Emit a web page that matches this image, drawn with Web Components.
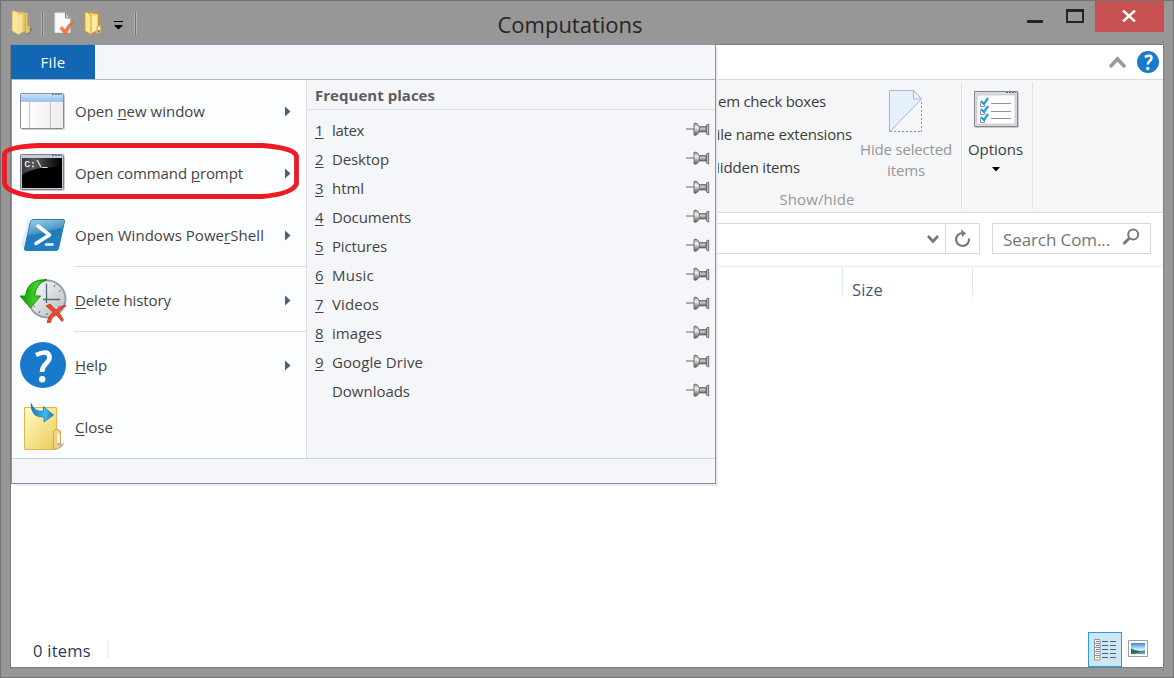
<!DOCTYPE html>
<html lang="en">
<head>
<meta charset="utf-8">
<title>Computations</title>
<style>
html,body{margin:0;height:100%;overflow:hidden}
body{font:15px/20px "Open Sans","Noto Sans",sans-serif;color:#3c3c3c}
</style>
</head>
<body>
<explorer-window></explorer-window>
<script>
const ICONS = {
folder:`<svg width="23" height="27" viewBox="0 0 23 27"><defs><linearGradient id="a"><stop stop-color="#fff6bd"/><stop offset="1" stop-color="#d9ae48"/></linearGradient></defs><path d="M15 24l5-7 2 2-4 5z" fill="#666" opacity=".45"/><path d="M5 1.500l11.500 1.500v17L8 24z" fill="#e6c263"/><path d="M8 5l7-1v15.500L8 24z" fill="url(#a)"/><path d="M1.300 1.500L4 1l4 3.500V24.500L1.300 21z" fill="#f9e897" stroke="#e6c970" stroke-width=".7"/><path d="M15 17l2-1.500 1.500 1V22L15 23.500z" fill="#e9cb5c"/></svg>`,
folder2:`<svg width="18" height="25" viewBox="0 0 18 25"><path d="M3 1.500L14.500 2.500V19L7 23z" fill="#f3d272" stroke="#cf9a25"/><path d="M7.500 5L13 4v14.500L7.500 22z" fill="#fbeba4"/><path d="M1 1.500L3.500 1.500 7 5V23.500L1 20z" fill="#fbe58f" stroke="#d9a32c"/><path d="M12.500 15.500l3-1.500 1.500 1v6l-4.500 2z" fill="#e8bc46"/><path d="M14 16h2v5h-2z" fill="#eaf4ff"/><path d="M14 19h2v2h-2z" fill="#478fe0"/></svg>`,
doc:`<svg width="21" height="24" viewBox="0 0 21 24"><path d="M1 1h10.500L16 5.500V20.500H1z" fill="#fafafa" stroke="#e4e4e4"/><path d="M11.500 1v5H16z" fill="#ddd" stroke="#666" stroke-width=".8"/><path d="M6 16.500l2-2 3 3.500Q13.500 12.500 18 9.500h2Q15.500 15 12.500 22h-2z" fill="#f07d4e" stroke="#d8622f" stroke-width=".6"/></svg>`,
qat:`<svg width="9" height="9"><path d="M0 .5h9" stroke="#000"/><path d="M.5 4h8v1L4.500 8.500.5 5z" fill="#000"/></svg>`,
newwin:`<svg width="50" height="50"><defs><linearGradient id="a" x2="0" y2="1"><stop stop-color="#c9e4fb"/><stop offset="1" stop-color="#8fc5f8"/></linearGradient><linearGradient id="b"><stop stop-color="#fff"/><stop offset="1" stop-color="#eee"/></linearGradient></defs><rect x="2.500" y="8.500" width="43" height="35" rx="1" fill="none" stroke="#ccc"/><rect x="1.500" y="7.500" width="43" height="35" rx="1" fill="url(#b)" stroke="#8b8d92"/><path d="M2 8h42v7H2z" fill="url(#a)"/><path d="M2 15.500h42M10.500 16v26M31.500 16v26" stroke="#c4c4c4"/><path d="M33 8.500h10" stroke="#537092" stroke-dasharray="2 1"/></svg>`,
cmd:`<svg width="50" height="50"><defs><linearGradient id="a"><stop stop-color="#383838"/><stop offset=".3" stop-color="#595959"/><stop offset="1" stop-color="#000"/></linearGradient></defs><rect x="2.500" y="7.500" width="43" height="35" rx="1" fill="none" stroke="#ccc"/><rect x="1.500" y="6.500" width="43" height="35" rx="1" fill="#c7ccd4" stroke="#7c818b"/><path d="M33 7.500h10" stroke="#537092" stroke-dasharray="2 1"/><path d="M3 10h40v30H3z" fill="#000"/><path d="M3 10h39v9Q15 18 3 27z" fill="url(#a)"/><text x="5.500" y="18.500" font-family="Liberation Mono" font-size="9" fill="#fff" stroke="#fff" stroke-width=".25" textLength="23">C:\\_</text></svg>`,
ps:`<svg width="50" height="50"><defs><linearGradient id="a" x2=".3" y2="1"><stop stop-color="#a9d4e8"/><stop offset=".48" stop-color="#4a98c8"/><stop offset=".52" stop-color="#237cba"/><stop offset="1" stop-color="#1c7fc8"/></linearGradient></defs><path d="M9 10L2 36l4 4 6-30z" fill="#b9dbee" opacity=".45"/><path d="M15 9.500h29q2 0 1.500 2l-6 27q-.5 2-2.500 2H7q-2 0-1.500-2l6-27q.5-2 3.500-2z" fill="url(#a)" stroke="#2c7cab"/><path d="M19 16L30.500 25 17 33.500" fill="none" stroke="#fff" stroke-width="3.500" stroke-linecap="round" stroke-linejoin="round"/><path d="M27 34.500h6.500" stroke="#fff" stroke-width="2.500" stroke-linecap="round"/></svg>`,
history:`<svg width="50" height="50"><defs><linearGradient id="a" y2="1"><stop stop-color="#fff"/><stop offset="1" stop-color="#b5babf"/></linearGradient><linearGradient id="g"><stop stop-color="#0d9800"/><stop offset=".6" stop-color="#42d32b"/><stop offset="1" stop-color="#169f0c"/></linearGradient></defs><circle cx="28" cy="24" r="18.500" fill="url(#a)" stroke="#9ca0a3" stroke-width="2"/><g stroke="#52687b"><path d="M27.500 8.500V28M24 24.500h17" stroke-width="1.300"/><path d="M36 10l-1 2M41.500 15.500l-1.500 1M14.500 32l1.500-1M20 38l1-2M28 40v-2M40 32l-1-1"/></g><path d="M28 4.500Q8 4 6.500 21H1l10.500 12L21.500 21h-6Q17 8 28 4.500z" fill="url(#g)" stroke="#168b0e"/><path d="M27 31l4-2 6 6q4-4 9-5l1 1q-4 2-7.500 6 3 4 5 8l-1.500 1.500L36.500 39q-4 3.500-5 8.500h-3.500q1-6 6-10.500z" fill="#e94a2d" stroke="#c92d18" stroke-width=".7"/></svg>`,
help:`<svg width="50" height="50"><circle cx="24" cy="25" r="23" fill="#1979ca"/><path d="M17 15q13-6 13.500 2.500c0 6-7.500 6-7.500 14.500" fill="none" stroke="#fff" stroke-width="4.600"/><circle cx="23.200" cy="39.300" r="3.200" fill="#fff"/></svg>`,
close:`<svg width="50" height="50"><defs><linearGradient id="a" x2="1" y2="1"><stop stop-color="#fffcc4"/><stop offset="1" stop-color="#ebcb58"/></linearGradient><linearGradient id="b"><stop stop-color="#1679ba"/><stop offset=".65" stop-color="#40bbf5"/><stop offset="1" stop-color="#1477b5"/></linearGradient></defs><path d="M38 46l7-6-1 4-4 3z" fill="#bbb"/><path d="M5.500 5.500h32v42h-32z" fill="url(#a)" stroke="#dfb64e"/><path d="M34.500 29l3-2 4 2v15l-3.500 3-3.500.5z" fill="#f2d28b" stroke="#d6a44a"/><path d="M39.500 31.500v11.500" stroke="#fff" stroke-width="2"/><path d="M39.500 41v2" stroke="#5eaef0" stroke-width="2"/><path d="M12 1.500q3 8 12.500 8V4.500L34.500 13 25 20v-5Q12 16 12 1.500z" fill="url(#b)" stroke="#2372a2" stroke-width=".7"/></svg>`,
pin:`<svg width="24" height="14"><defs><linearGradient id="a" x2="0" y2="1"><stop stop-color="#888"/><stop offset=".35" stop-color="#f4f4f4"/><stop offset="1" stop-color="#555"/></linearGradient><linearGradient id="b" x2="0" y2="1"><stop stop-color="#777"/><stop offset=".4" stop-color="#ccc"/><stop offset="1" stop-color="#5a5a5a"/></linearGradient></defs><path d="M0 7h8" stroke="#666"/><path d="M12.500 4.500H20v5.500h-7.500z" fill="url(#b)" stroke="#666" stroke-width=".7"/><path d="M8 1.500q2-1 3.500.5 2 2 2 5.200t-2 5Q10 13.800 8 13z" fill="url(#a)" stroke="#6a6a6a" stroke-width=".9"/><path d="M20.500 3l2.200-1v11l-2.200-1z" fill="#bbb" stroke="#666" stroke-width=".9"/></svg>`,
arrow:`<svg width="6" height="11"><path d="M0 .5l5.500 5L0 10.500z" fill="#4b607f"/></svg>`,
min:`<svg width="16" height="3"><path d="M0 0h16v3H0z" fill="#252525"/></svg>`,
max:`<svg width="18" height="14"><path d="M0 0h18v14H0zM2 3v9h14V3z" fill="#252525" fill-rule="evenodd"/></svg>`,
x:`<svg width="14" height="12"><path d="M1 .5L13 11.500M13 .5L1 11.500" stroke="#fff" stroke-width="2.400"/></svg>`,
collapse:`<svg width="17" height="14"><path d="M1 12l7.500-8L16 12" fill="none" stroke="#999" stroke-width="3.600"/></svg>`,
helpsm:`<svg width="22" height="22"><circle cx="11" cy="11" r="11" fill="#1979ca"/><path d="M7.800 6q6.500-3 6.700 1c0 3-3.700 3-3.700 6.500" fill="none" stroke="#fff" stroke-width="2.600"/><circle cx="10.800" cy="17.500" r="1.700" fill="#fff"/></svg>`,
hide:`<svg width="34" height="43"><path d="M.5.5h24l8 8.500L.5 42z" fill="#e6f0fd" stroke="#a9b6cf"/><path d="M24.500 .5V9h8z" fill="#edf4fd" stroke="#a9b6cf"/><path d="M32.500 12v30M1 41.500h32" fill="none" stroke="#8592ba" stroke-dasharray="2.200 1.800"/></svg>`,
options:`<svg width="45" height="37"><path d="M1.500 1.500h43v35h-43z" fill="none" stroke="#ccc"/><path d="M.5.5h43v35H.5z" fill="#d7dae0" stroke="#81848c"/><path d="M3 4h38v29H3z" fill="#fff" stroke="#b6bac4" stroke-width=".6"/><path d="M32 1.500h10" stroke="#53617f" stroke-dasharray="2 1"/><path d="M17 12.500h20M17 20.500h20M17 27.500h20" stroke="#92939f" stroke-width="1.200"/><g id="c"><path d="M6.500 11.500h4v4h-4z" fill="none" stroke="#8d8da5"/><path d="M7 10l3 3 4-6" fill="none" stroke="#29a0d8" stroke-width="2.300"/></g><use href="#c" y="8"/><use href="#c" y="16"/></svg>`,
down:`<svg width="8" height="5"><path d="M0 0h8L4 4.500z" fill="#000"/></svg>`,
chev:`<svg width="14" height="10"><path d="M2 2l5 5.500L12 2" fill="none" stroke="#777" stroke-width="2.700"/></svg>`,
refresh:`<svg width="18" height="19"><path d="M8.500 4A6.500 6.500 0 1 0 15 9.500" fill="none" stroke="#777" stroke-width="2.200"/><path d="M7 .5l5 3.800L8 8z" fill="#777"/></svg>`,
search:`<svg width="18" height="18"><circle cx="11.200" cy="6.500" r="5" fill="none" stroke="#777" stroke-width="2"/><path d="M7.500 10L1.500 16" stroke="#777" stroke-width="2.800"/></svg>`,
details:`<svg width="24" height="22"><path d="M1.500.5h5.500v20.500H1.500z" fill="#fff" stroke="#8a90a5"/><path d="M1 4.500h6M1 8.500h6M1 12.500h6M1 16.500h6" stroke="#8a90a5"/><path d="M3 2.500h3" stroke="#3b9b58"/><path d="M3 6.500h3" stroke="#e33"/><path d="M3 10.500h3" stroke="#3482ed"/><path d="M3 14.500h3M3 18.500h3" stroke="#c6b927"/><path d="M9 2.500h14M9 6.500h14M9 10.500h14M9 14.500h14M9 18.500h14" stroke="#526078" stroke-dasharray="6 2"/></svg>`,
thumb:`<svg width="20" height="17"><defs><linearGradient id="a" x2="0" y2="1"><stop stop-color="#3c86d8"/><stop offset=".6" stop-color="#d9effa"/></linearGradient></defs><path d="M.5.5h19v16H.5z" fill="#fff" stroke="#969fac"/><path d="M3 3h14v11H3z" fill="url(#a)"/><path d="M3 8.500q6 3.500 14 2v3.500H3z" fill="#28704a"/><path d="M6 14q5-2.500 11-3v3z" fill="#6499bd"/></svg>`
};
const define = (name, css, html, init) => {
  const template = document.createElement('template');
  template.innerHTML = `<style>*{box-sizing:border-box}${css}</style>${html}`;
  customElements.define(name, class extends HTMLElement {
    constructor(){ super(); this.attachShadow({mode:'open'}); }
    connectedCallback(){
      if (this.ready) return;
      this.ready = true;
      this.shadowRoot.append(template.content.cloneNode(true));
      if (init) init(this, this.shadowRoot);
    }
  });
};
define('ui-icon', ':host{display:block;flex:none}svg{display:block}', '', (el, root) => {
  const box = document.createElement('template');
  box.innerHTML = ICONS[el.getAttribute('name')];
  root.append(box.content.cloneNode(true));
});
// A one-line label; its tracking is set so that the line takes up the given width.
define('ui-label', ':host{display:block;flex:none;white-space:pre}span{display:inline-block}::slotted(u){text-underline-offset:2px;text-decoration-thickness:1px}', '<span><slot></slot></span>', (el, root) => {
  const width = +el.getAttribute('width'), span = root.querySelector('span');
  if (width) span.style.letterSpacing = (width - span.getBoundingClientRect().width) / el.textContent.length + 'px';
});
define('title-bar', `:host{display:flex;height:43px;position:relative;padding:8px 0 0 11px;align-items:flex-start}
 i{width:3px;height:23px;background:#707070;border:1px solid #b4b4b4;border-width:0 1px;margin-top:3px}
 .t{position:absolute;left:0;right:0;top:8px;display:flex;justify-content:center;padding-right:34px;font-size:22px;line-height:30px;color:#252525}
 .b{margin-left:auto;display:flex;margin-top:-8px;padding-right:9px}
 .c{width:69px;height:31px;background:#c75050;display:grid;place-items:center;margin-left:11px;padding:0 2px 2px 0}
 .q{margin:12px 12px 0 12px}`,
 `<ui-icon name="folder" style="margin-top:1px;margin-left:-1px"></ui-icon><i style="margin-left:7px"></i><ui-icon name="doc" style="margin:3px 9px 0 10px"></ui-icon><ui-icon name="folder2" style="margin-top:2px"></ui-icon><ui-icon class="q" name="qat"></ui-icon><i style="margin-left:-1px"></i>
 <div class="t"><ui-label width="145">Computations</ui-label></div>
 <div class="b"><ui-icon name="min" style="margin-top:19px"></ui-icon><ui-icon name="max" style="margin:8px 0 0 23px"></ui-icon><div class="c"><ui-icon name="x"></ui-icon></div></div>`);
define('ribbon-bar', `:host{display:block}
 .tabs{height:35px;border-bottom:1px solid #dadbdc;display:flex;justify-content:flex-end;align-items:center;gap:11px;padding-right:4px}
 .r{height:133px;background:#f5f6f7;border-bottom:1px solid #dadbdc;display:flex;padding:2px 0 3px 696px}
 .g{border-right:1px solid #e2e3e4;display:grid}
 .sh{width:255px;grid-template:98px 30px/145px 109px}
 .ch{padding:4px 0 0 2px;display:grid;grid-auto-rows:33px;line-height:31px;align-content:start}
 .h{display:flex;flex-direction:column;align-items:center;color:#979797;line-height:21px;padding:8px 1px 0 0}
 .cap{grid-column:1/3;color:#979797;justify-self:center;padding:9px 34px 0 0}
 .o{width:71px;justify-items:center;align-content:start;padding:9px 3px 0 0}`,
 `<div class="tabs"><ui-icon name="collapse"></ui-icon><ui-icon name="helpsm"></ui-icon></div>
 <div class="r"><div class="g sh"><div class="ch"><ui-label width="117">Item check boxes</ui-label><ui-label width="143">File name extensions</ui-label><ui-label width="91">Hidden items</ui-label></div>
 <div class="h"><ui-icon name="hide" style="margin-bottom:6px"></ui-icon><ui-label width="92">Hide selected</ui-label><ui-label width="38">items</ui-label></div><ui-label class="cap" width="75">Show/hide</ui-label></div>
 <div class="g o"><ui-icon name="options" style="margin:0 0 11px 2px"></ui-icon><ui-label width="55">Options</ui-label><ui-icon name="down" style="margin-top:8px"></ui-icon></div></div>`);
define('address-row', `:host{display:flex;height:55px;padding:10px 12px 0 40px;border-bottom:3px solid #f5f5f6}
 div{height:31px;border:1px solid #d9d9d9;display:flex;align-items:center}
 .a{flex:1;justify-content:flex-end;padding-right:5px}.f{width:34px;border-left:0;justify-content:center}
 .s{width:159px;margin-left:12px;padding:0 10px;color:#757575;font-size:17px;justify-content:space-between}`,
 `<div class="a"><ui-icon name="chev"></ui-icon></div><div class="f"><ui-icon name="refresh"></ui-icon></div><div class="s"><ui-label width="107" style="margin-top:2px">Search Com...</ui-label><ui-icon name="search" style="margin-bottom:4px"></ui-icon></div>`);
define('column-header', `:host{display:flex;height:35px;padding-left:831px}
 div{width:131px;border:1px solid;border-width:0 1px;border-image:linear-gradient(#dbe8f5 60%,#fff) 1;padding:11px 0 0 9px;color:#44597a;font-size:16.5px;line-height:22px}`,
 `<div><ui-label width="31">Size</ui-label></div>`);
define('status-bar', `:host{display:flex;margin-top:auto;height:36px;align-items:center;padding:0 15px 0 22px;color:#1e395b;font-size:16.5px}
 i{width:2px;height:17px;background:#f2f2f2;margin:0 auto 0 16px}
 b{width:34px;height:35px;background:#cce8f6;border:1px solid #26a0da;display:grid;place-items:center;margin:1px 6px 0 0}`,
 `<ui-label width="58" style="margin-top:3px">0 items</ui-label><i></i><b><ui-icon name="details"></ui-icon></b><ui-icon name="thumb" style="margin-bottom:2px"></ui-icon>`);
define('menu-item', `:host{display:flex;height:62px;align-items:center;padding:0 15px 0 7px;color:#444}
 .a{margin-left:auto}:host([plain]) .a{display:none}`,
 `<ui-icon id="i"></ui-icon><div style="width:6px"></div><slot></slot><ui-icon class="a" name="arrow"></ui-icon>`,
 (el, root) => { const icon = root.getElementById('i'), next = document.createElement('ui-icon'); next.setAttribute('name', el.getAttribute('icon')); icon.replaceWith(next); });
define('place-item', `:host{display:flex;height:29px;align-items:center;padding:0 5px 0 8px;color:#444}
 .n{width:17px}u{text-underline-offset:2px;text-decoration-thickness:1px}.p{margin:0 0 1px auto}`,
 `<div class="n"><u></u></div><slot></slot><ui-icon class="p" name="pin"></ui-icon>`,
 (el, root) => root.querySelector('u').textContent = el.getAttribute('key') || '');
define('file-menu', `:host{display:grid;grid-template:35px 378px 25px/295px 1fr;width:705px;height:440px;border:1px solid #8492a6;background:#f5f6f9;box-shadow:3px 3px 0 -1px #eaebed}
 .top{grid-column:1/3;border-bottom:1px solid #a9b7c7;display:flex}
 .file{width:84px;margin-left:-1px;background:#1267b4;color:#fff;display:flex;justify-content:center;align-items:center;height:34px}
 .l{background:#fcfdff;border-right:1px solid #dcdee2;width:295px}
 hr{border:0;border-top:1px solid #dcdee2;height:3px;margin:0 0 0 62px}
 .h{height:30px;border-bottom:1px solid #dcdee2;padding:5px 0 0 8px;font-weight:700;color:#5d5d5d;margin-bottom:5px}
 .bot{grid-column:1/3;border-top:1px solid #c6d3e6}`,
 `<div class="top"><div class="file"><ui-label width="25">File</ui-label></div></div>
 <div class="l"><menu-item icon="newwin"><ui-label width="130">Open <u>n</u>ew window</ui-label></menu-item>
 <menu-item icon="cmd"><ui-label width="168">Open command <u>p</u>rompt</ui-label></menu-item>
 <menu-item icon="ps"><ui-label width="189">Open Windows Powe<u>r</u>Shell</ui-label></menu-item><hr>
 <menu-item icon="history"><ui-label width="96"><u>D</u>elete history</ui-label></menu-item><hr>
 <menu-item icon="help"><ui-label width="32"><u>H</u>elp</ui-label></menu-item>
 <menu-item icon="close" plain><ui-label width="38"><u>C</u>lose</ui-label></menu-item></div>
 <div><div class="h"><ui-label width="120">Frequent places</ui-label></div>
 <place-item key="1"><ui-label width="32">latex</ui-label></place-item>
 <place-item key="2"><ui-label width="57">Desktop</ui-label></place-item>
 <place-item key="3"><ui-label width="32">html</ui-label></place-item>
 <place-item key="4"><ui-label width="79">Documents</ui-label></place-item>
 <place-item key="5"><ui-label width="55">Pictures</ui-label></place-item>
 <place-item key="6"><ui-label width="42">Music</ui-label></place-item>
 <place-item key="7"><ui-label width="47">Videos</ui-label></place-item>
 <place-item key="8"><ui-label width="50">images</ui-label></place-item>
 <place-item key="9"><ui-label width="91">Google Drive</ui-label></place-item>
 <place-item><ui-label width="78">Downloads</ui-label></place-item></div>
 <div class="bot"></div>`);
define('red-mark', ':host{display:block;width:304px;height:64px}svg{display:block}',
 `<svg width="304" height="64"><path d="M38 6.500Q6 8 4.500 15V44Q5 53 34 57.500H262Q292 55 296.500 45V17Q294 9 263 6.500Z" fill="none" stroke="#ed1c24" stroke-width="4.800" stroke-linejoin="round"/></svg>`);
define('explorer-window', `:host{display:block;box-sizing:border-box;width:1174px;height:678px;background:#979797;border:1px solid #737373;position:relative}
 main{margin:0 9px;height:624px;background:#fff;border:1px solid #7d7d7d;display:flex;flex-direction:column}
 file-menu{position:absolute;left:10px;top:43px}red-mark{position:absolute;left:-1px;top:138px}`,
 `<title-bar></title-bar><main><ribbon-bar></ribbon-bar><address-row></address-row><column-header></column-header><status-bar></status-bar></main><file-menu></file-menu><red-mark></red-mark>`);
</script>
</body>
</html>
